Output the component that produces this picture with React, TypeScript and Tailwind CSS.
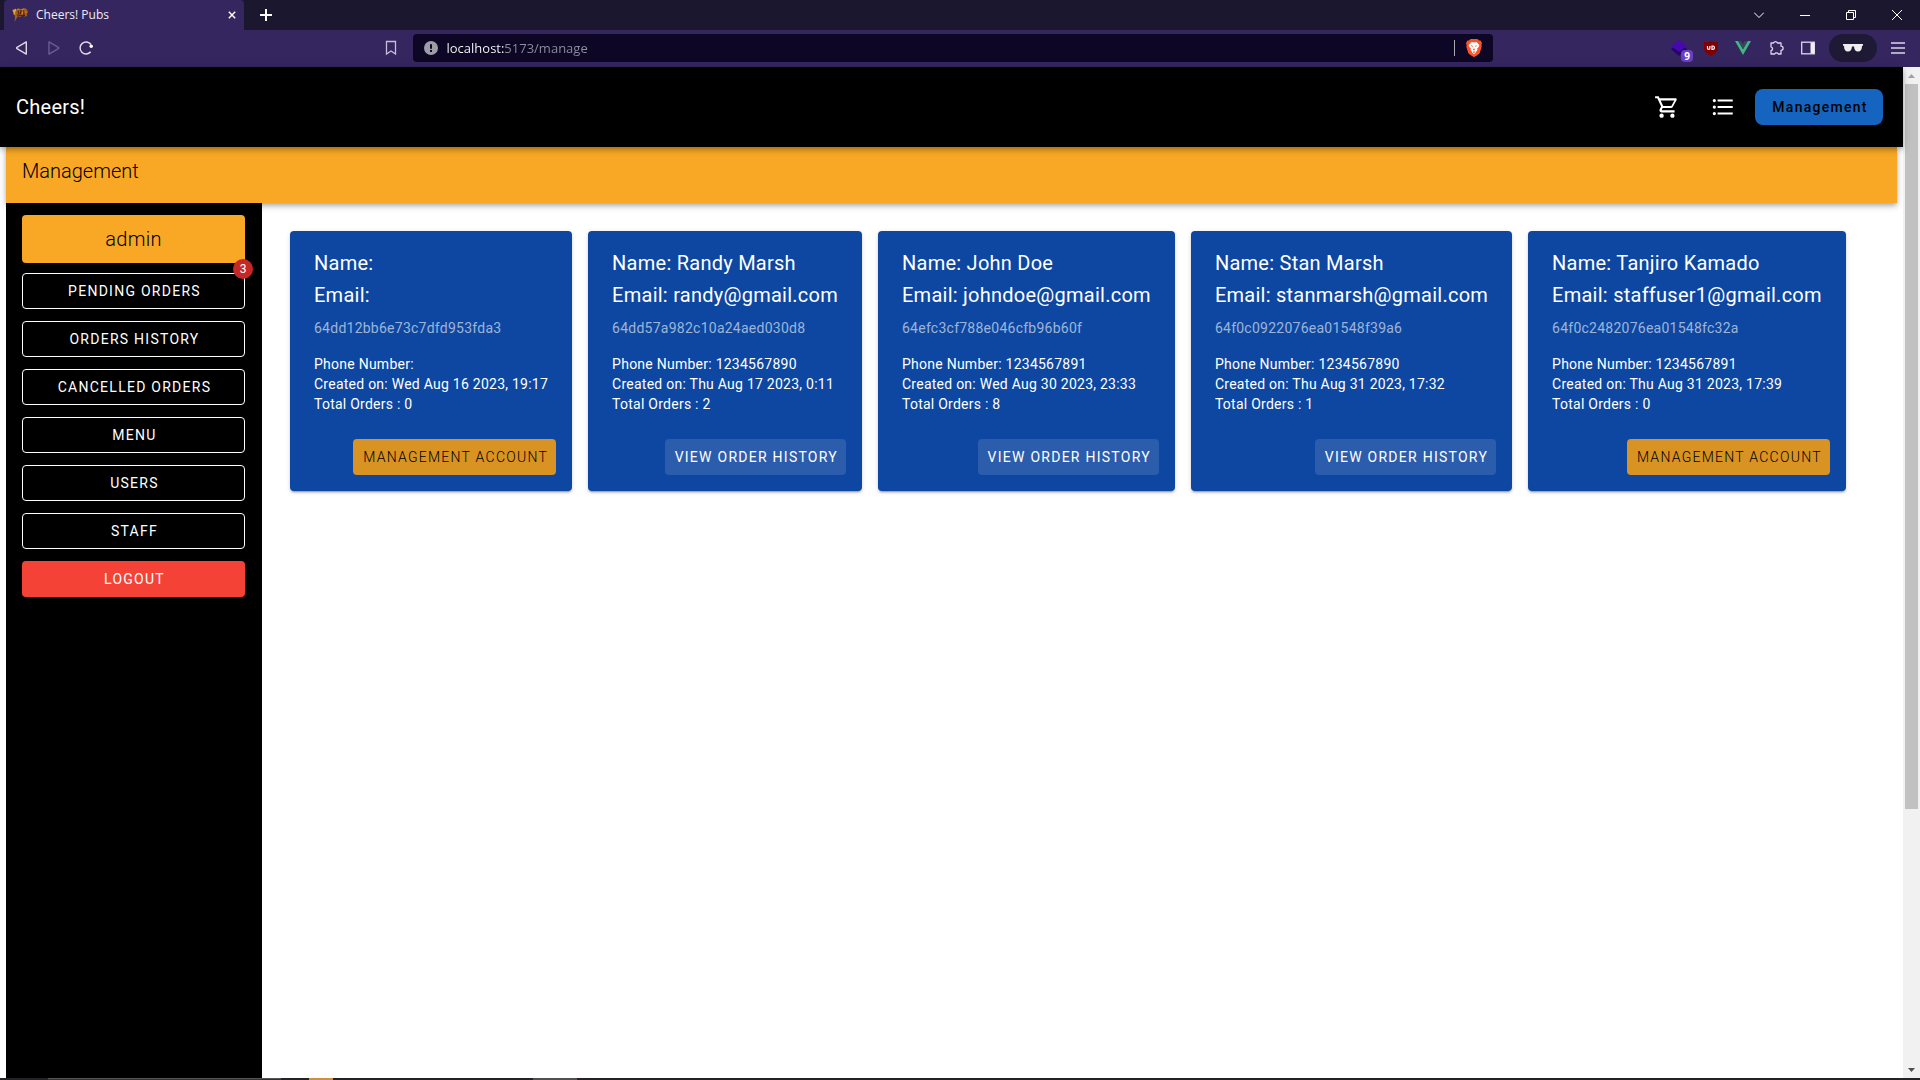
import React from "react";

type User = {
  name: string;
  email: string;
  id: string;
  phone: string;
  created: string;
  orders: number;
  staff?: boolean;
};

const users: User[] = [
  { name: "", email: "", id: "64dd12bb6e73c7dfd953fda3", phone: "", created: "Wed Aug 16 2023, 19:17", orders: 0, staff: true },
  { name: "Randy Marsh", email: "randy@gmail.com", id: "64dd57a982c10a24aed030d8", phone: "1234567890", created: "Thu Aug 17 2023, 0:11", orders: 2 },
  { name: "John Doe", email: "johndoe@gmail.com", id: "64efc3cf788e046cfb96b60f", phone: "1234567891", created: "Wed Aug 30 2023, 23:33", orders: 8 },
  { name: "Stan Marsh", email: "stanmarsh@gmail.com", id: "64f0c0922076ea01548f39a6", phone: "1234567890", created: "Thu Aug 31 2023, 17:32", orders: 1 },
  { name: "Tanjiro Kamado", email: "staffuser1@gmail.com", id: "64f0c2482076ea01548fc32a", phone: "1234567891", created: "Thu Aug 31 2023, 17:39", orders: 0, staff: true },
];

const navItems = ["Pending Orders", "Orders History", "Cancelled Orders", "Menu", "Users", "Staff"];

function Favicon() {
  return (
    <svg viewBox="0 0 16 16" className="h-4 w-4" aria-hidden="true">
      <path d="M0 3 3.500 1.500 5 3l2-1.500 3 .8L13 1l2 1.500L16 5l-1.200 2 .4 2-2.700.5-2-1L8 10 6 9l-1.500 2.500L2.500 15 3 11 2.500 8 1 7.500 2 5z" fill="#a85a1c" />
      <path d="M.5 3.500l3-1.500L4.500 3 3 5.500 3.500 8 2 7z" fill="#d9a648" />
      <path d="M6 3.500l1 3.500M9 3l-.5 4M11.500 3.500 12 8M5 8l8 .5" stroke="#3a1d0c" strokeWidth="1" fill="none" />
      <path d="M5 2.500l2-.5M9.500 2.500 12 2M13.500 4.500l1 1.500M10 7.500l1-3" stroke="#e08a2c" strokeWidth="1" fill="none" />
    </svg>
  );
}

function BrowserTabs() {
  return (
    <div className="flex h-[30px] shrink-0 items-stretch bg-[#1a172e] pl-1 text-white">
      <div className="flex w-60 items-center rounded-t bg-[#35265f] pl-2 pr-2">
        <Favicon />
        <span className="ml-2 flex-1 font-['Open_Sans',sans-serif] text-xs font-medium text-[#eeeaf5]">Cheers! Pubs</span>
        <button aria-label="Close tab" className="flex">
          <svg viewBox="0 0 10 10" className="h-2 w-2" stroke="#fff" strokeWidth="1.800"><path d="M1 1l8 8M9 1l-8 8" /></svg>
        </button>
      </div>
      <button aria-label="New tab" className="ml-4 flex items-center">
        <svg viewBox="0 0 12 12" className="h-3 w-3" stroke="#fff" strokeWidth="2"><path d="M6 0v12M0 6h12" /></svg>
      </button>
      <div className="flex-1" />
      <button aria-label="Search tabs" className="flex w-[46px] items-center justify-center">
        <svg viewBox="0 0 10 6" className="h-1.5 w-2.5" fill="none" stroke="#fff"><path d="M0 .5l5 5 5-5" /></svg>
      </button>
      <button aria-label="Minimize" className="flex w-[46px] items-center justify-center">
        <span className="h-px w-2.5 bg-white" />
      </button>
      <button aria-label="Restore" className="flex w-[46px] items-center justify-center">
        <svg viewBox="0 0 10 10" className="h-2.5 w-2.5" fill="none" stroke="#fff"><path d="M.5 2.500h7v7h-7zM2.500 2.500v-2h7v7h-2" /></svg>
      </button>
      <button aria-label="Close window" className="flex w-[46px] items-center justify-center">
        <svg viewBox="0 0 10 10" className="h-2.5 w-2.5" stroke="#fff"><path d="M0 0l10 10M10 0L0 10" /></svg>
      </button>
    </div>
  );
}

function BrowserBar() {
  return (
    <div className="flex h-[37px] shrink-0 items-center bg-[#35265f] pb-px text-white">
      <div className="flex flex-1 items-center pl-4">
        <button aria-label="Back">
          <svg viewBox="0 0 14 16" className="h-4 w-3.5" fill="none" stroke="#dcd8e8" strokeWidth="1.400" strokeLinejoin="round"><path d="M10.300 1.900v12.200L1 8.700a.8.8 0 0 1 0-1.400z" /></svg>
        </button>
        <button aria-label="Forward" className="ml-[18px]">
          <svg viewBox="0 0 14 16" className="h-4 w-3.5" fill="none" stroke="#6a5d90" strokeWidth="1.400" strokeLinejoin="round"><path d="M1 1.900v12.200l9.300-5.400a.8.8 0 0 0 0-1.400z" /></svg>
        </button>
        <button aria-label="Reload" className="ml-4">
          <svg viewBox="0 0 16 16" className="h-4 w-4" fill="none" stroke="#e2dfec" strokeWidth="1.400"><path d="M12.700 11.800A6 6 0 1 1 13 4.500" /><circle cx="13.200" cy="6.200" r="1.700" fill="#fff" stroke="none" /></svg>
        </button>
        <div className="flex-1" />
        <button aria-label="Bookmark" className="mr-4">
          <svg viewBox="0 0 12 16" className="h-4 w-3" fill="none" stroke="#c4bed6" strokeWidth="1.300"><path d="M1.500 1.500h9v12.500L6 11l-4.500 3z" /></svg>
        </button>
      </div>
      <div className="mr-4 flex h-7 w-[1080px] items-center rounded bg-[#0d0624] px-[11px]">
        <svg viewBox="0 0 14 14" className="h-3.5 w-3.5 shrink-0"><circle cx="7" cy="7" r="7" fill="#9c9da6" /><path d="M6 3.200h2v4.500H6zM6 9h2v2H6z" fill="#0d0624" /></svg>
        <input
          id="url"
          aria-label="Address"
          defaultValue="localhost:5173/manage"
          className="ml-[9px] h-6 flex-1 bg-[linear-gradient(90deg,#ffffff_57px,#918ea0_57px)] bg-clip-text font-['Open_Sans',sans-serif] text-[13px] text-transparent outline-none"
        />
        <span className="h-4 w-px bg-[#aaa8b5]" />
        <button aria-label="Shields" className="ml-[11px]">
          <svg viewBox="0 0 16 18" className="h-[18px] w-4"><path d="M4.500 0h7l1.500 1.600 1.500-.2L16 4l-.6 2.200.3 1.500-2 6.300c-.4 1-4.200 3.500-5.700 4-1.500-.5-5.300-3-5.700-4l-2-6.300.3-1.500L0 4l1.500-2.600 1.500.2z" fill="#fb542b" /><path d="M8 3.500l2.500-.5 2.800 3-.7 2-1.600 1.800.5 1.200-1.500 1.500.2.8L8 15.300l-2.200-2 .2-.8L4.500 11l.5-1.200L3.400 8l-.7-2 2.800-3z" fill="#fff" /><path d="M4.500 6.300l2.300.5-.4 1.300zM11.500 6.300l-2.300.5.4 1.300zM7 11l1 .6 1-.6-1-2zM6.500 13l1.500-.8 1.500.8L8 14z" fill="#fb542b" /></svg>
        </button>
      </div>
      <div className="flex flex-1 items-center justify-end pr-[15px]">
        <button aria-label="Extension, 9 notices" className="relative mr-[17px] flex h-4 w-4 items-center">
          <svg viewBox="0 0 16 16" className="h-4 w-4"><path d="M0 9l8-5 8 5-8 7z" fill="#22046b" /><path d="M8 0l8 6-8 6-8-6z" fill="#4609ae" /></svg>
          <span className="absolute left-2.5 top-2.5 flex h-3 w-3 items-center justify-center rounded-sm bg-[#6b3fc4] font-['Open_Sans',sans-serif] text-[10px] font-bold leading-3">9</span>
        </button>
        <button aria-label="Content blocker" className="mr-[17px]">
          <svg viewBox="0 0 14 15" className="h-[15px] w-3.5"><path d="M7 0c2 1.200 4 1.300 7 1v5.500c0 4-3 6.500-7 8.500-4-2-7-4.500-7-8.500V1c3 .3 5 .2 7-1z" fill="#800000" /><path d="M3.500 5v2.200a1.200 1.200 0 0 0 2.400 0V5M8 5v3.500h.7a1.750 1.750 0 0 0 0-3.500z" fill="none" stroke="#fff" strokeWidth="1.200" /></svg>
        </button>
        <button aria-label="Vue devtools" className="mr-[17px]">
          <svg viewBox="0 0 16 14" className="h-3.5 w-4"><path d="M0 0h3.200L8 8.300 12.800 0H16L8 14z" fill="#41b883" /><path d="M3.200 0h3L8 3.200 9.800 0h3L8 8.300z" fill="#35495e" /></svg>
        </button>
        <button aria-label="Extensions" className="mr-[17px]">
          <svg viewBox="0 0 16 16" className="h-4 w-4" fill="none" stroke="#dcd8e8" strokeWidth="1.300" strokeLinejoin="round"><path d="M3 3h2.600a2 2 0 0 1 3.800 0H13v3.200a2 2 0 0 1 0 4.200V14h-2.700a2 2 0 0 0-3.600 0H3v-3.300a2 2 0 0 0 0-3.900z" /></svg>
        </button>
        <button aria-label="Sidebar" className="mr-3.5">
          <svg viewBox="0 0 14 14" className="h-3.5 w-3.5"><rect x=".7" y="1.200" width="12.600" height="11.600" fill="none" stroke="#dcd8e8" strokeWidth="1.300" /><path d="M9.500 1.500h4v11h-4z" fill="#f0eef5" /></svg>
        </button>
        <button aria-label="Private profile" className="mr-3.5 flex h-7 w-12 items-center justify-center rounded-full bg-[#1e1934]">
          <svg viewBox="0 0 20 8" className="h-2 w-5" fill="#eee"><path d="M0 0h20v1.500l-1 .5c0 3.500-1.200 5.500-4 5.500-2.500 0-3.800-2-4-5H9c-.2 3-1.500 5-4 5-2.800 0-4-2-4-5.500L0 1.500z" /></svg>
        </button>
        <button aria-label="Menu">
          <svg viewBox="0 0 14 12" className="h-3 w-3.5" stroke="#dcd8e8" strokeWidth="1.400"><path d="M0 1h14M0 6h14M0 11h14" /></svg>
        </button>
      </div>
    </div>
  );
}

function AppHeader() {
  return (
    <header className="relative z-10 flex h-20 shrink-0 items-center bg-black pl-4 pr-5 text-white shadow-[0_2px_4px_-1px_rgba(0,0,0,.2),0_4px_5px_rgba(0,0,0,.14),0_1px_10px_rgba(0,0,0,.12)]">
      <a href="#home" className="text-xl tracking-[0.0125em]">Cheers!</a>
      <div className="flex-1" />
      <button aria-label="Cart" className="mr-[30px]">
        <svg viewBox="0 0 24 24" className="h-[26px] w-[26px]" fill="currentColor"><path d="M17,18A2,2 0 0,1 19,20A2,2 0 0,1 17,22C15.89,22 15,21.1 15,20C15,18.89 15.89,18 17,18M1,2H4.27L5.21,4H20A1,1 0 0,1 21,5C21,5.17 20.95,5.34 20.88,5.5L17.3,11.97C16.96,12.58 16.3,13 15.55,13H8.1L7.2,14.63L7.17,14.75A0.25,0.25 0 0,0 7.42,15H19V17H7C5.89,17 5,16.1 5,15C5,14.65 5.09,14.32 5.24,14.04L6.6,11.59L3,4H1V2M7,18A2,2 0 0,1 9,20A2,2 0 0,1 7,22C5.89,22 5,21.1 5,20C5,18.89 5.89,18 7,18M16,11L18.78,6H6.14L8.5,11H16Z" /></svg>
      </button>
      <button aria-label="Orders" className="mr-[19px]">
        <svg viewBox="0 0 24 24" className="h-[26px] w-[26px]" fill="currentColor"><path d="M7,5H21V7H7V5M7,13V11H21V13H7M4,4.5A1.5,1.5 0 0,1 5.5,6A1.5,1.5 0 0,1 4,7.5A1.5,1.5 0 0,1 2.5,6A1.5,1.5 0 0,1 4,4.5M4,10.5A1.5,1.5 0 0,1 5.5,12A1.5,1.5 0 0,1 4,13.5A1.5,1.5 0 0,1 2.5,12A1.5,1.5 0 0,1 4,10.5M7,19V17H21V19H7M4,16.5A1.5,1.5 0 0,1 5.5,18A1.5,1.5 0 0,1 4,19.5A1.5,1.5 0 0,1 2.5,18A1.5,1.5 0 0,1 4,16.5Z" /></svg>
      </button>
      <button className="h-9 w-32 rounded-lg bg-[#1565c0] pl-0.5 text-sm font-medium tracking-[0.09em] text-black">Management</button>
    </header>
  );
}

function Sidebar() {
  return (
    <nav className="flex w-64 shrink-0 flex-col gap-3 bg-black pb-3 pl-4 pr-[17px] pt-3">
      <div className="-mb-0.5 flex h-12 items-center justify-center rounded bg-[#f9a825] text-xl font-light tracking-[0.0125em] text-black">admin</div>
      {navItems.map((item, i) => (
        <button key={item} className="relative h-9 rounded border border-white pl-0.5 text-sm uppercase tracking-[0.09em] text-white">
          {item}
          {i === 0 && (
            <span className="absolute -right-[9px] -top-[15px] flex h-5 w-5 items-center justify-center rounded-full bg-[#c62828] text-xs tracking-normal">3</span>
          )}
        </button>
      ))}
      <button className="h-9 rounded bg-[#f44336] pl-0.5 text-sm uppercase tracking-[0.09em] text-white">Logout</button>
    </nav>
  );
}

function UserCard({ user }: { user: User }) {
  return (
    <article className="flex flex-col rounded bg-[#0d47a1] p-4 text-white shadow-[0_3px_1px_-2px_rgba(0,0,0,.2),0_2px_2px_rgba(0,0,0,.14),0_1px_5px_rgba(0,0,0,.12)]">
      <div className="px-2">
        <h2 className="whitespace-nowrap text-xl leading-8 tracking-[0.0125em]">Name: {user.name}</h2>
        <p className="whitespace-nowrap text-xl leading-8 tracking-[0.0125em]">Email: {user.email}</p>
        <p className="pt-2 text-sm leading-4.5 tracking-[0.0178em] text-white/60">{user.id}</p>
        <div className="whitespace-nowrap pb-[25px] pt-[17px] text-sm leading-5 tracking-[0.0178em]">
          <p>Phone Number: {user.phone}</p>
          <p>Created on: {user.created}</p>
          <p>Total Orders : {user.orders}</p>
        </div>
      </div>
      {user.staff ? (
        <button className="h-9 self-end whitespace-nowrap rounded bg-[#d99322] pl-2.5 pr-2 text-sm font-light uppercase tracking-[0.09em] text-black">Management Account</button>
      ) : (
        <button className="h-9 self-end whitespace-nowrap rounded bg-[#2b5dac] pl-2.5 pr-2 text-sm uppercase tracking-[0.09em]">View Order History</button>
      )}
    </article>
  );
}

export default function App() {
  return (
    <div className="flex h-screen flex-col overflow-hidden bg-white font-[Roboto,sans-serif]">
      <BrowserTabs />
      <BrowserBar />
      <div className="flex min-h-0 flex-1">
        <div className="flex min-w-0 flex-1 flex-col">
          <AppHeader />
          <div className="mx-1.5 flex min-h-0 flex-1 flex-col">
            <div className="flex h-14 shrink-0 items-start bg-[#f9a825] px-4 pt-2 shadow-[0_2px_4px_-1px_rgba(0,0,0,.2),0_4px_5px_rgba(0,0,0,.14),0_1px_10px_rgba(0,0,0,.12)]">
              <h1 className="text-xl font-light leading-8 text-black">Management</h1>
            </div>
            <div className="relative flex min-h-0 flex-1">
              <Sidebar />
              <main className="flex flex-1 flex-wrap content-start gap-4 px-7 pt-7">
                {users.map((u) => (
                  <UserCard key={u.id} user={u} />
                ))}
              </main>
            </div>
          </div>
        </div>
        <div className="flex w-[17px] shrink-0 flex-col items-center bg-[#f1f1f1]">
          <svg viewBox="0 0 17 17" className="h-[17px] w-[17px] shrink-0" fill="#a3a3a3"><path d="M5 11h7L8.500 7z" /></svg>
          <div className="h-[725px] w-[13px] bg-[#c1c1c1]" />
          <div className="flex-1" />
          <svg viewBox="0 0 17 17" className="h-[17px] w-[17px] shrink-0" fill="#505050"><path d="M5 7h7l-3.500 4z" /></svg>
        </div>
      </div>
      <div className="flex h-0.5 shrink-0 bg-[#242226]">
        <div className="ml-12 w-[233px] border-t border-[#555] bg-[#333]" />
        <div className="ml-7 w-6 bg-[#c8923f]" />
        <div className="ml-[200px] w-11 bg-[#505050]" />
      </div>
    </div>
  );
}
